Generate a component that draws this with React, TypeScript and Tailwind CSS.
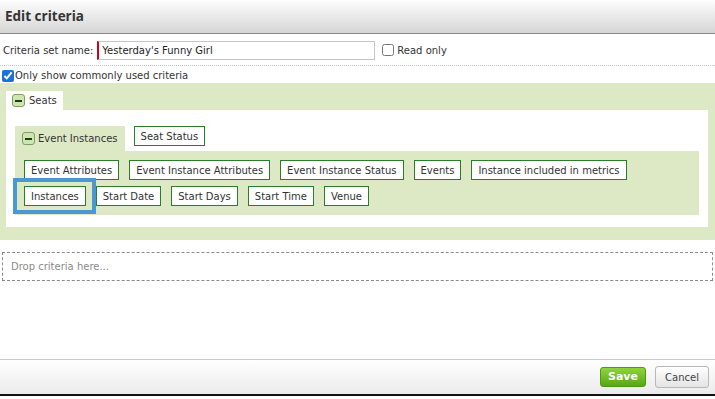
import React from "react";

function MinusIcon() {
  return (
    <span className="w-[13px] h-[13px] rounded-[3px] border border-[#7f9f62] bg-[#cfe5b0] flex items-center justify-center shrink-0">
      <span className="block w-[7px] h-[2px] bg-[#1f3a16]" />
    </span>
  );
}

function Crit({ label }: { label: string }) {
  return (
    <div className="h-[20px] px-[6px] border border-[#2b7d2b] bg-white flex items-center whitespace-nowrap text-[#333]">
      {label}
    </div>
  );
}

export default function App() {
  return (
    <div className="w-[715px] h-[399px] flex flex-col bg-white font-['DejaVu_Sans',sans-serif] text-[10px] text-[#333] overflow-hidden">
      {/* Header */}
      <div className="h-[34px] shrink-0 border-b border-[#8a8a8a] bg-linear-to-b from-[#fefefe] to-[#d5d5d5] flex items-center pl-[5px]">
        <span className="font-['Open_Sans',sans-serif] font-bold text-[13.5px] text-[#333]">Edit criteria</span>
      </div>

      {/* Name row */}
      <div className="h-[32px] shrink-0 border-b border-dotted border-[#c4c4c4] flex items-center pl-[3px] pt-[1px]">
        <span>Criteria set name:</span>
        <input
          type="text"
          defaultValue="Yesterday's Funny Girl"
          className="ml-[4px] w-[278px] h-[19px] border border-[#c6c6c6] border-l-2 border-l-[#d0021b] px-[3px] text-[10px] text-[#222] outline-none font-['DejaVu_Sans',sans-serif]"
        />
        <input type="checkbox" className="ml-[7px] m-0 w-[12px] h-[12px]" />
        <span className="ml-[3px]">Read only</span>
      </div>

      {/* Only show row */}
      <div className="h-[17px] shrink-0 flex items-center pl-[2px] pt-[2px]">
        <input type="checkbox" defaultChecked className="m-0 w-[12px] h-[12px] accent-[#1a73d9]" />
        <span className="ml-[1px]">Only show commonly used criteria</span>
      </div>

      {/* Green criteria area */}
      <div className="shrink-0 bg-[#dde9c5] pt-[8px] pl-[6px] pr-[7px] pb-[13px]">
        <div className="inline-flex h-[19px] bg-white px-[6px] items-center gap-[4px] align-top">
          <MinusIcon />
          <span>Seats</span>
        </div>
        <div className="bg-white pt-[16px] pl-[9px] pr-[9px] pb-[12px]">
          <div className="flex items-start">
            <div className="h-[25px] bg-[#dde9c5] pl-[7px] pr-[7px] flex items-center gap-[3px]">
              <MinusIcon />
              <span>Event Instances</span>
            </div>
            <div className="ml-[9px]">
              <Crit label="Seat Status" />
            </div>
          </div>
          <div className="bg-[#dde9c5] pt-[9px] pl-[9px] pr-[9px] pb-[9px] flex flex-col gap-[6px]">
            <div className="flex gap-[10px]">
              <Crit label="Event Attributes" />
              <Crit label="Event Instance Attributes" />
              <Crit label="Event Instance Status" />
              <Crit label="Events" />
              <Crit label="Instance included in metrics" />
            </div>
            <div className="flex gap-[10px]">
              <div className="relative">
                <Crit label="Instances" />
                <div className="absolute -left-[11px] -top-[8px] w-[83px] h-[36px] border-4 border-[#4a98cf] pointer-events-none" />
              </div>
              <Crit label="Start Date" />
              <Crit label="Start Days" />
              <Crit label="Start Time" />
              <Crit label="Venue" />
            </div>
          </div>
        </div>
      </div>

      {/* Drop area */}
      <div className="mt-[12px] mx-[2px] h-[29px] shrink-0 border border-dashed border-[#8a8a8a] pl-[8px] flex items-center text-[#8a8a8a]">
        Drop criteria here...
      </div>

      <div className="flex-1" />

      {/* Footer */}
      <div className="h-[37px] shrink-0 border-t border-[#cacaca] border-b-2 border-b-[#111] bg-linear-to-b from-white to-[#ebebeb] flex items-center justify-end pr-[6px] gap-[9px]">
        <button className="w-[46px] h-[20px] rounded-[3px] border border-[#4f9a12] bg-linear-to-b from-[#8ed53a] to-[#58a712] text-white font-bold text-[11px] font-['DejaVu_Sans',sans-serif] flex items-center justify-center">
          Save
        </button>
        <button className="w-[54px] h-[22px] rounded-[3px] border border-[#b8b8b8] bg-linear-to-b from-white to-[#e4e4e4] text-[#444] text-[10px] font-['DejaVu_Sans',sans-serif] flex items-center justify-center">
          Cancel
        </button>
      </div>
      <div className="h-[3px] shrink-0 bg-white" />
    </div>
  );
}
